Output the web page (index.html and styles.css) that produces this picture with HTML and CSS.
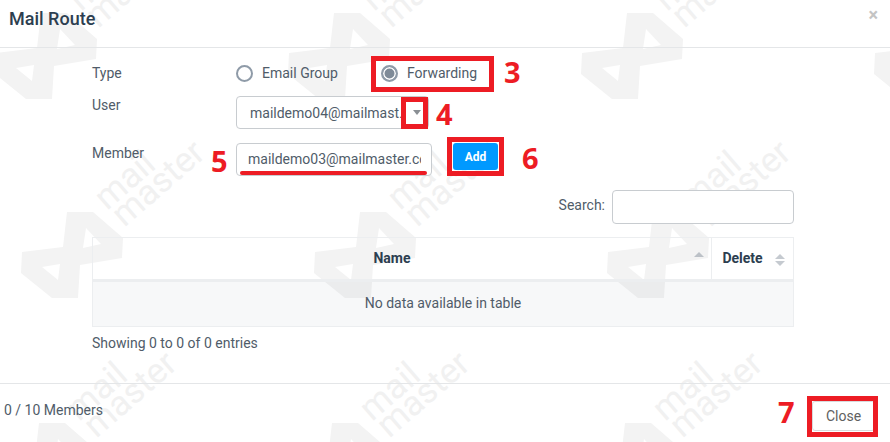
FILE: index.html
```html
<!DOCTYPE html>
<html lang="en">
<head>
<meta charset="utf-8">
<title>Mail Route</title>
<link rel="stylesheet" href="styles.css">
</head>
<body>
<div class="modal">
  <svg class="watermark" width="890" height="442" viewBox="0 0 890 442" aria-hidden="true">
    <defs>
      <g id="wm">
        <path class="wm-logo" fill-rule="evenodd" d="M52 7H78L108 33L107 53L65 60L63 93H37L6 68L7 47L48 42ZM71 23L86 39L68 43ZM27 62L45 59L43 75Z"/>
        <g transform="translate(92 6) rotate(-41)">
          <text class="wm-text" x="0" y="0">mail</text>
          <text class="wm-text" x="2" y="24">master</text>
        </g>
      </g>
    </defs>
    <use href="#wm" x="-11" y="6"/><use href="#wm" x="282" y="6"/><use href="#wm" x="575" y="6"/><use href="#wm" x="868" y="6"/>
    <use href="#wm" x="15" y="205"/><use href="#wm" x="308" y="205"/><use href="#wm" x="601" y="205"/>
    <use href="#wm" x="-13" y="416"/><use href="#wm" x="280" y="416"/><use href="#wm" x="573" y="416"/><use href="#wm" x="866" y="416"/>
  </svg>

  <header class="modal-header">
    <h1 class="modal-title">Mail Route</h1>
    <span class="modal-x">×</span>
  </header>

  <main class="modal-body">
    <div class="row row-type">
      <div class="label">Type</div>
      <div class="radios">
        <span class="radio-item radio-email"><span class="radio"></span>Email Group</span>
        <span class="radio-item"><span class="radio radio-on"></span>Forwarding</span>
      </div>
    </div>
    <div class="row row-user">
      <div class="label">User</div>
      <div class="select"><span class="select-text">maildemo04@mailmast..</span><span class="caret"></span></div>
    </div>
    <div class="row row-member">
      <div class="label">Member</div>
      <input class="input-member" type="text" value="maildemo03@mailmaster.com">
      <button class="btn-add" type="button">Add</button>
    </div>
    <div class="search-row">
      <label class="search-label" for="q">Search:</label>
      <input class="search-input" id="q" type="text">
    </div>
    <table class="data-table">
      <thead>
        <tr>
          <th class="col-name">Name<span class="sort"><span class="tri-up tri-dark"></span></span></th>
          <th class="col-delete">Delete<span class="sort"><span class="tri-up"></span><span class="tri-down"></span></span></th>
        </tr>
      </thead>
      <tbody>
        <tr><td colspan="2">No data available in table</td></tr>
      </tbody>
    </table>
    <div class="info">Showing 0 to 0 of 0 entries</div>
  </main>

  <footer class="modal-footer">
    <span class="member-count">0 / 10 Members</span>
    <button class="btn-close" type="button">Close</button>
  </footer>

  <div class="frame frame-3"></div>
  <div class="frame frame-4"></div>
  <div class="frame frame-6"></div>
  <div class="frame frame-7"></div>
  <div class="underline-5"></div>
  <span class="num num-3">3</span>
  <span class="num num-4">4</span>
  <span class="num num-5">5</span>
  <span class="num num-6">6</span>
  <span class="num num-7">7</span>
</div>
</body>
</html>
```

FILE: styles.css
```css
* { box-sizing: border-box; }
html, body { margin: 0; padding: 0; background: #fff; }
body { font-family: Roboto, "Liberation Sans", sans-serif; font-size: 14px; color: #505c69; overflow: hidden; }

.modal { position: relative; width: 890px; height: 442px; display: flex; flex-direction: column; overflow: hidden; }
.watermark { position: absolute; left: 0; top: 0; }
.wm-logo { fill: #f3f3f3; }
.wm-text { fill: #f1f1f1; font-family: Roboto, sans-serif; font-size: 35px; font-weight: 400; }

.modal-header, .modal-body, .modal-footer { position: relative; }

.modal-header { height: 48px; flex: none; border-bottom: 1px solid #e4e6e8; display: flex; justify-content: space-between; padding: 7px 12px 0 9px; }
.modal-title { margin: 0; font-size: 18px; line-height: 24px; font-weight: 500; color: #2c3e50; }
.modal-x { font-size: 18px; line-height: 16px; font-weight: 700; color: #c4c4c4; }

.modal-body { flex: 1; padding: 14px 96px 0 92px; }
.row { display: flex; align-items: flex-start; }
.label { width: 144px; flex: none; line-height: 20px; }

.row-type { height: 22px; align-items: center; }
.radios { display: flex; }
.radio-item { display: inline-flex; align-items: center; }
.radio-email { width: 145px; }
.radio { width: 17px; height: 17px; border: 2px solid #8f9ba8; border-radius: 50%; margin-right: 9px; background: #fff; }
.radio-on { background: #7f8b98; box-shadow: inset 0 0 0 1.5px #fff; }

.row-user { margin-top: 11px; }
.select { width: 193px; height: 33px; margin-top: 1px; border: 1px solid #c8ccd0; border-radius: 4px; background: #fff; display: flex; align-items: center; justify-content: space-between; padding: 0 7px 0 13px; }
.select-text { white-space: nowrap; }
.caret { border-left: 4px solid transparent; border-right: 4px solid transparent; border-top: 5px solid #8a8f94; }

.row-member { margin-top: 14px; }
.input-member { width: 196px; height: 33px; border: 1px solid #c8ccd0; border-radius: 4px; background: #fff; padding: 0 10px 2px 11px; font: 14px Roboto, sans-serif; color: #505c69; outline: none; }
.btn-add { width: 45px; height: 27px; margin-left: 21px; border: 0; border-radius: 3px; background: #0099ff; color: #fff; font: 700 12px Roboto, sans-serif; padding: 0; }

.search-row { display: flex; justify-content: flex-end; align-items: center; margin-top: 14px; height: 34px; }
.search-label { margin-right: 7px; margin-top: -4px; }
.search-input { width: 182px; height: 34px; border: 1px solid #c8ccd0; border-radius: 4px; background: #fff; outline: none; }

.data-table { width: 702px; margin-top: 13px; border-collapse: collapse; table-layout: fixed; }
.data-table th { height: 43px; border: 1px solid #eceef0; border-bottom: 3px solid #eceef0; font-weight: 700; color: #2c3e50; position: relative; padding: 0 0 2px; text-align: center; }
.col-name { padding-right: 20px !important; }
.col-delete { width: 82px; padding-right: 20px !important; }
.sort { position: absolute; display: flex; flex-direction: column; gap: 2px; }
.col-name .sort { top: 14px; right: 7px; }
.col-delete .sort { top: 16px; right: 8px; }
.tri-up { width: 0; height: 0; border-left: 5px solid transparent; border-right: 5px solid transparent; border-bottom: 5px solid #c5cad0; }
.tri-down { width: 0; height: 0; border-left: 5px solid transparent; border-right: 5px solid transparent; border-top: 5px solid #c5cad0; }
.tri-dark { border-bottom-color: #bcc1c7; }
.data-table td { height: 46px; border: 1px solid #eceef0; background: rgba(60, 70, 90, 0.04); text-align: center; padding: 0 0 3px; }

.info { margin-top: 6px; line-height: 20px; }

.modal-footer { height: 59px; flex: none; border-top: 1px solid #e4e6e8; display: flex; justify-content: space-between; align-items: flex-start; padding: 16px 15px 0 4px; }
.member-count { line-height: 20px; }
.btn-close { width: 63px; height: 30px; margin-top: 1px; border: 1px solid #d8dadc; border-radius: 3px; background: #fff; font: 14px Roboto, sans-serif; color: #606060; padding: 0; }

.frame { position: absolute; border: 5px solid #ed1c24; }
.frame-3 { left: 371px; top: 56px; width: 123px; height: 36px; }
.frame-4 { left: 401px; top: 97px; width: 27px; height: 32px; }
.frame-6 { left: 447px; top: 137px; width: 57px; height: 39px; }
.frame-7 { left: 807px; top: 396px; width: 71px; height: 41px; }
.underline-5 { position: absolute; left: 240px; top: 171px; width: 187px; height: 4px; border-radius: 2px; background: #ed1c24; }

.num { position: absolute; font-family: "Open Sans", sans-serif; font-weight: 700; font-size: 29px; line-height: 30px; color: #ed1c24; }
.num-3 { left: 504px; top: 57px; }
.num-4 { left: 436px; top: 99px; }
.num-5 { left: 211px; top: 146px; }
.num-6 { left: 522px; top: 143px; }
.num-7 { left: 778px; top: 397px; }
```
